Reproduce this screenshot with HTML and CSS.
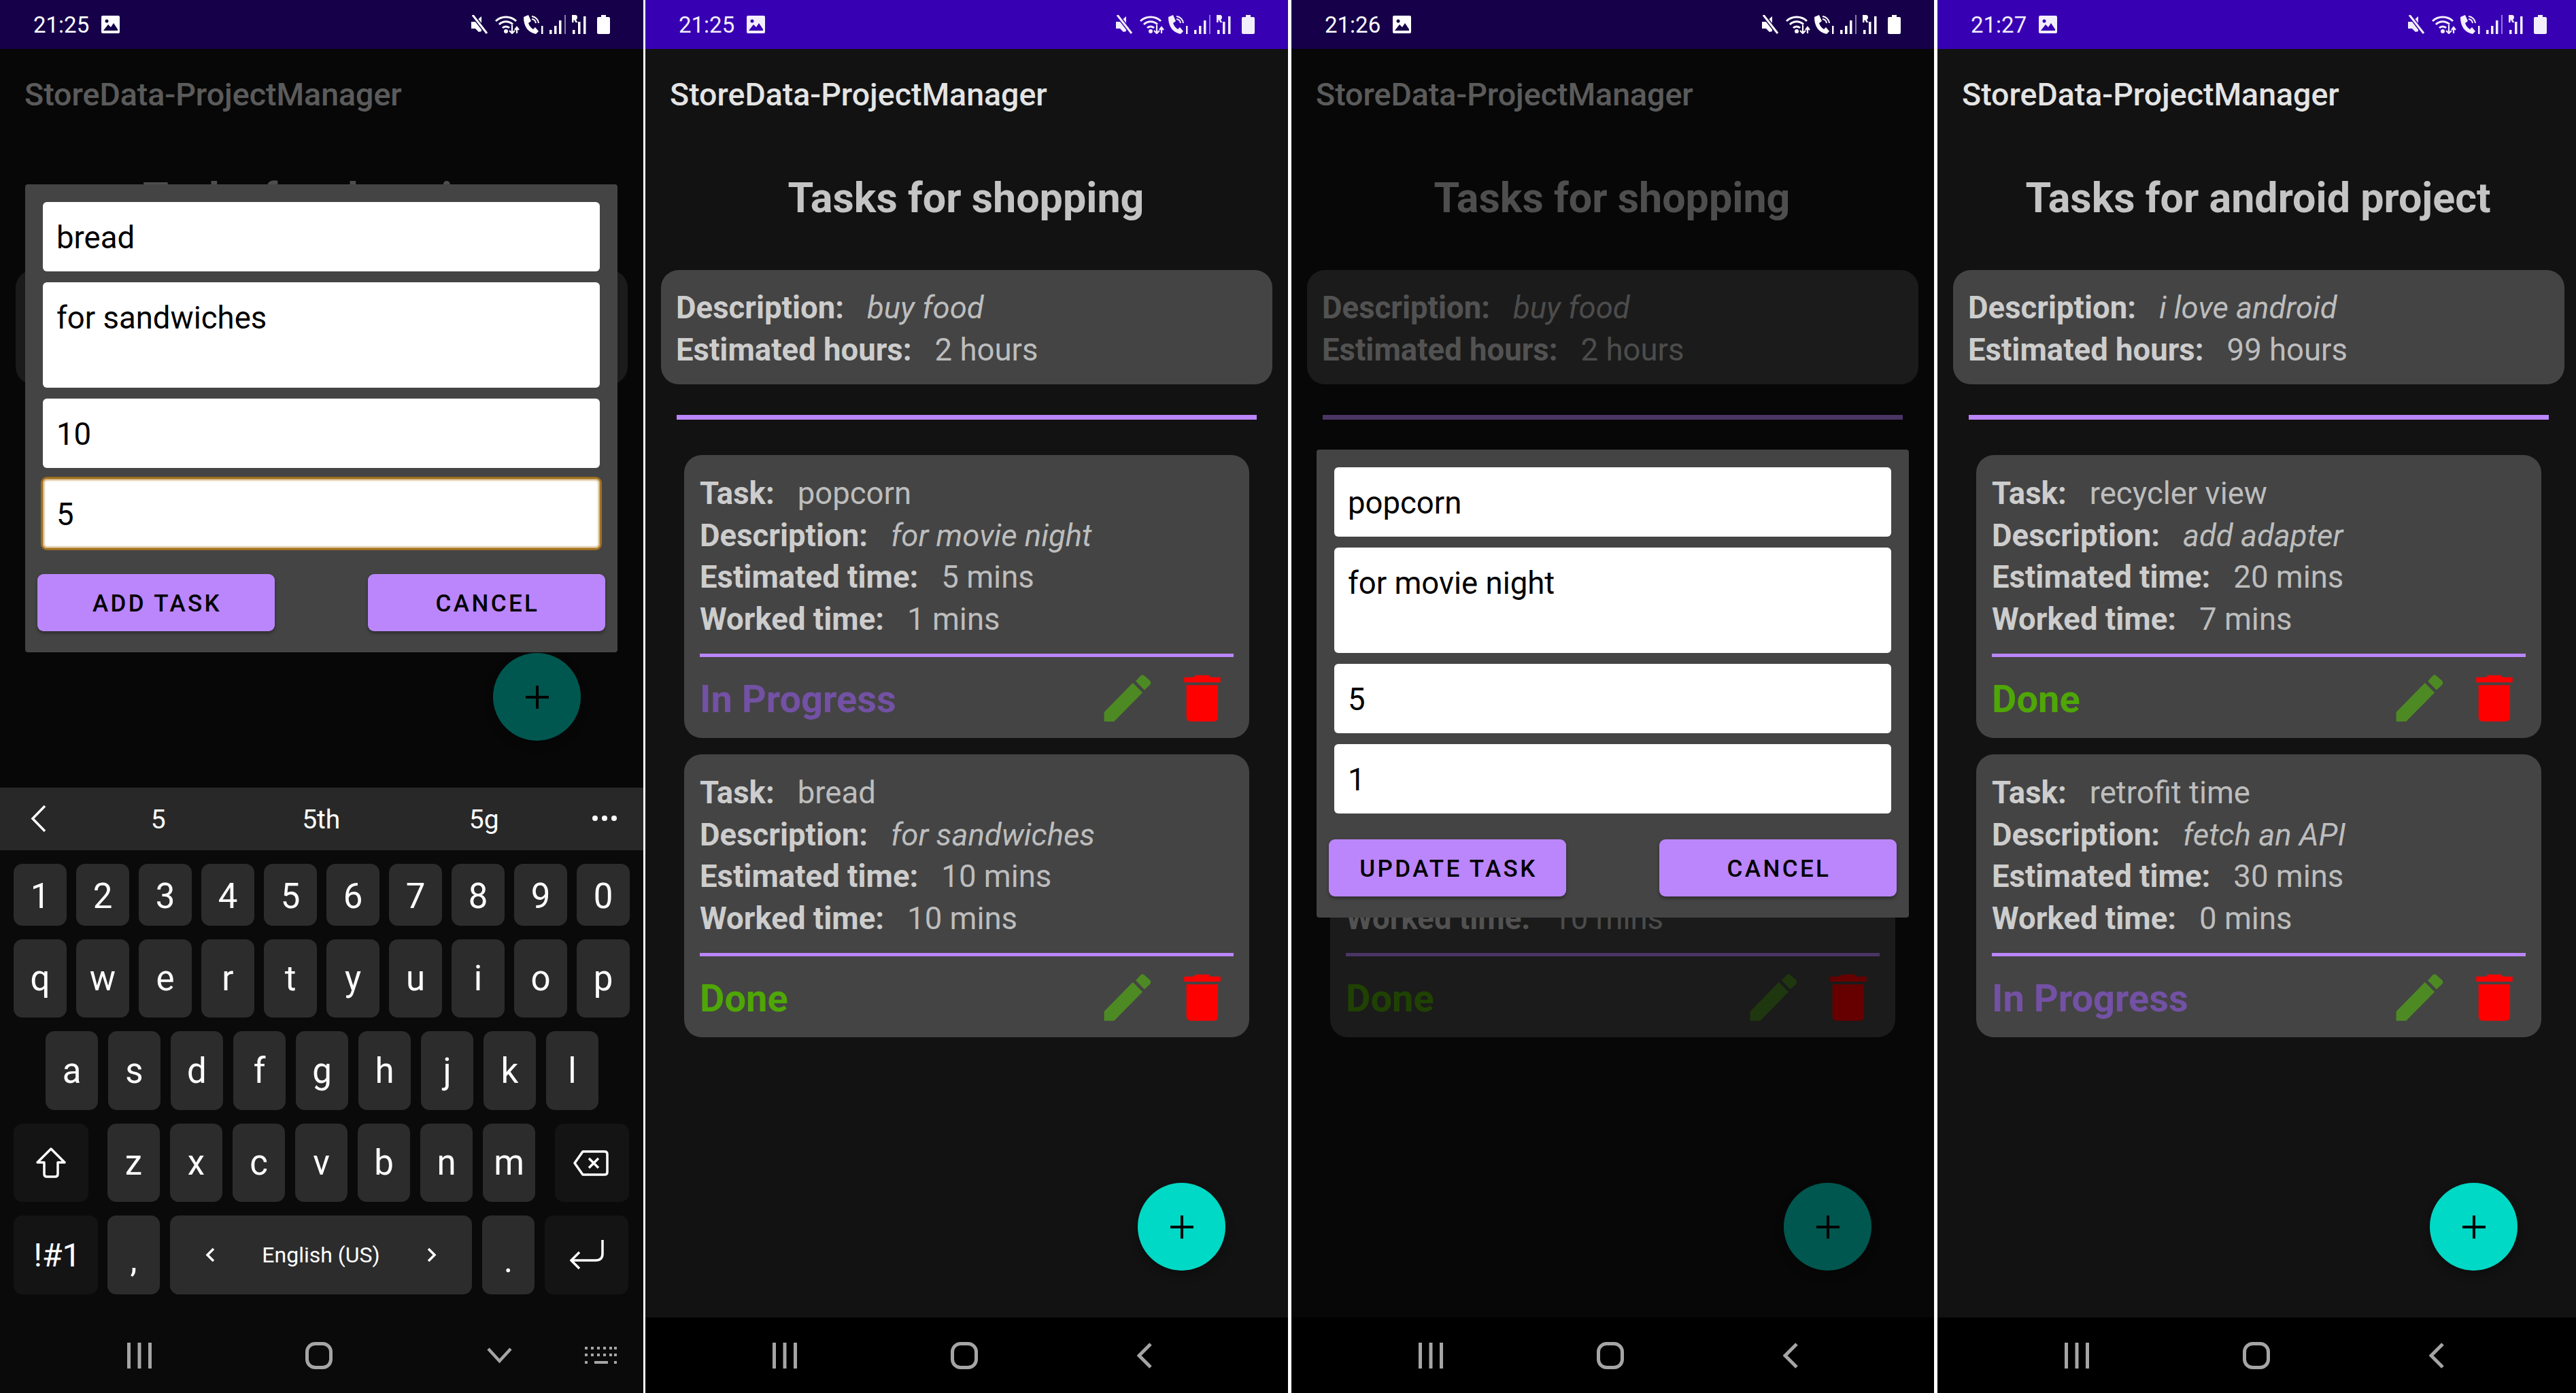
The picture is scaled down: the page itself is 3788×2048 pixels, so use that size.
FILE: index.html
```html
<!DOCTYPE html>
<html lang="en">
<head>
    <meta charset="UTF-8">
    <title>StoreData-ProjectManager</title>
    <link rel="stylesheet" href="styles.css">
</head>
<body>
    <svg class="sprites" width="0" height="0">
        <symbol id="i-image" viewBox="0 0 27 26">
            <rect width="27" height="26" rx="2" fill="currentColor"/>
            <path d="M3 22 L10 13 L14 17 L18 11 L24 20 V22 Z" fill="var(--bar)"/>
            <circle cx="8" cy="8" r="2.5" fill="var(--bar)"/>
        </symbol>
        <symbol id="i-mute" viewBox="0 0 26 28">
            <path d="M1 10 H7 L16 2 V24 L12 25 L7 20 H1 Z" fill="currentColor"/>
            <path d="M3 0 L24 27" stroke="var(--bar)" stroke-width="6"/>
            <path d="M3 0 L24 27" stroke="currentColor" stroke-width="3"/>
        </symbol>
        <symbol id="i-wifi" viewBox="0 0 36 28" fill="none" stroke="currentColor" stroke-width="3">
            <path d="M1 9 A22 22 0 0 1 31 9"/>
            <path d="M6 14 A14 14 0 0 1 26 14"/>
            <path d="M11 19 A7 7 0 0 1 21 19"/>
            <circle cx="16" cy="24" r="1.5"/>
            <path d="M25 15 V27 M21 23 L25 27 L29 23 M32 27 V19" stroke-width="2.2"/>
            <path d="M29 22 L32 18 L35 22" stroke-width="2.2"/>
        </symbol>
        <symbol id="i-call" viewBox="0 0 32 28">
            <path d="M2 3 L9 0 L13 9 L9 12 Q11 18 16 21 L19 18 L24 24 L20 28 Q2 24 2 3 Z" fill="currentColor"/>
            <path d="M14 2 A11 11 0 0 1 24 12 M14 6 A7 7 0 0 1 20 12" fill="none" stroke="currentColor" stroke-width="2"/>
            <rect x="28" y="16" width="2.5" height="12" fill="currentColor"/>
        </symbol>
        <symbol id="i-signal" viewBox="0 0 26 28" fill="currentColor">
            <rect x="0" y="22" width="3.5" height="6"/>
            <rect x="7" y="16" width="3.5" height="12"/>
            <rect x="14" y="8" width="3.5" height="20"/>
            <rect x="22" y="0" width="2" height="28" opacity=".5"/>
        </symbol>
        <symbol id="i-rsignal" viewBox="0 0 25 28" fill="currentColor">
            <path d="M1 0 H6 Q9 0 9 3.5 Q9 6 7 7 L9.5 11 H6.5 L4.5 7.5 H3.5 V11 H1 Z"/>
            <rect x="2" y="22" width="3.5" height="6"/>
            <rect x="10" y="10" width="3.5" height="18"/>
            <rect x="18" y="2" width="3.5" height="26"/>
        </symbol>
        <symbol id="i-battery" viewBox="0 0 19 28">
            <path d="M6 0 H13 V3 H17 Q19 3 19 5 V26 Q19 28 17 28 H2 Q0 28 0 26 V5 Q0 3 2 3 H6 Z" fill="currentColor"/>
        </symbol>
        <symbol id="i-pencil" viewBox="120 90 220 220" fill="currentColor">
            <path d="M128 303 V262 L255 132 L298 175 L172 303 Z"/>
            <path d="M268 125 L288 102 Q298 92 308 102 L330 122 Q340 132 330 142 L306 164 Z"/>
        </symbol>
        <symbol id="i-trash" viewBox="475 90 175 220" fill="currentColor">
            <path d="M482 107 H525 L532 98 H590 L600 107 H643 V130 H482 Z"/>
            <path d="M492 142 H632 V282 Q632 303 612 303 H512 Q492 303 492 282 Z"/>
        </symbol>
        <symbol id="i-plus" viewBox="0 0 34 34">
            <path d="M17 0 V34 M0 17 H34" stroke="currentColor" stroke-width="4"/>
        </symbol>
        <symbol id="i-recents" viewBox="0 0 36 38" fill="currentColor">
            <rect x="0" y="0" width="5" height="38"/>
            <rect x="15.5" y="0" width="5" height="38"/>
            <rect x="31" y="0" width="5" height="38"/>
        </symbol>
        <symbol id="i-home" viewBox="0 0 40 40">
            <rect x="2.5" y="2.5" width="35" height="35" rx="12" fill="none" stroke="currentColor" stroke-width="5"/>
        </symbol>
        <symbol id="i-back" viewBox="0 0 22 38">
            <path d="M20 2 L3 19 L20 36" fill="none" stroke="currentColor" stroke-width="5"/>
        </symbol>
        <symbol id="i-down" viewBox="0 0 37 23">
            <path d="M2 2 L18.500 20 L35 2" fill="none" stroke="currentColor" stroke-width="4.500"/>
        </symbol>
        <symbol id="i-kbd" viewBox="0 0 47 26" fill="currentColor">
            <path d="M0 0 H4 V4 H0 Z M9 0 H13 V4 H9 Z M18 0 H22 V4 H18 Z M27 0 H31 V4 H27 Z M36 0 H40 V4 H36 Z M43 0 H47 V4 H43 Z"/>
            <path d="M0 10 H4 V14 H0 Z M9 10 H13 V14 H9 Z M18 10 H22 V14 H18 Z M27 10 H31 V14 H27 Z M36 10 H40 V14 H36 Z M43 10 H47 V14 H43 Z"/>
            <path d="M0 21 H4 V25 H0 Z M14 21 H34 V25 H14 Z M43 21 H47 V25 H43 Z"/>
        </symbol>
        <symbol id="i-chev-left" viewBox="0 0 23 41">
            <path d="M21 2 L3 20.500 L21 39" fill="none" stroke="currentColor" stroke-width="3.500"/>
        </symbol>
        <symbol id="i-dots" viewBox="0 0 36 8" fill="currentColor">
            <circle cx="4" cy="4" r="4"/><circle cx="18" cy="4" r="4"/><circle cx="32" cy="4" r="4"/>
        </symbol>
        <symbol id="i-shift" viewBox="0 0 44 45">
            <path d="M22 2 L42 22 H32 V39 Q32 43 28 43 H16 Q12 43 12 39 V22 H2 Z" fill="none" stroke="currentColor" stroke-width="3.500" stroke-linejoin="round"/>
        </symbol>
        <symbol id="i-bksp" viewBox="0 0 52 38">
            <path d="M14 2 H46 Q50 2 50 6 V32 Q50 36 46 36 H14 L2 19 Z" fill="none" stroke="currentColor" stroke-width="3.500" stroke-linejoin="round"/>
            <path d="M23 12 L37 26 M37 12 L23 26" stroke="currentColor" stroke-width="3.500"/>
        </symbol>
        <symbol id="i-enter" viewBox="0 0 50 44">
            <path d="M48 0 V20 Q48 30 38 30 H3 M14 18 L2 30 L14 42" fill="none" stroke="currentColor" stroke-width="3.500"/>
        </symbol>
        <symbol id="i-small-left" viewBox="0 0 14 22">
            <path d="M12 2 L3 11 L12 20" fill="none" stroke="currentColor" stroke-width="3.500"/>
        </symbol>
        <symbol id="i-small-right" viewBox="0 0 14 22">
            <path d="M2 2 L11 11 L2 20" fill="none" stroke="currentColor" stroke-width="3.500"/>
        </symbol>
    </svg>

    <div class="phones">

        <!-- add task dialog, keyboard open -->
        <div class="phone">
            <div class="statusbar statusbar-dim">
                <span class="clock">21:25</span>
                <svg class="ic-image"><use href="#i-image"/></svg>
                <div class="status-icons">
                    <svg class="ic-mute"><use href="#i-mute"/></svg>
                    <svg class="ic-wifi"><use href="#i-wifi"/></svg>
                    <svg class="ic-call"><use href="#i-call"/></svg>
                    <svg class="ic-signal"><use href="#i-signal"/></svg>
                    <svg class="ic-rsignal"><use href="#i-rsignal"/></svg>
                    <svg class="ic-battery"><use href="#i-battery"/></svg>
                </div>
            </div>
            <div class="screen">
                <div class="appbar">StoreData-ProjectManager</div>
                <h1 class="heading">Tasks for shopping</h1>
                <div class="project-card">
                    <div class="line"><b>Description:</b><i class="val">buy food</i></div>
                    <div class="line"><b>Estimated hours:</b><span class="val">2 hours</span></div>
                </div>
                <div class="project-rule"></div>
                <div class="fab"><svg class="ic-plus"><use href="#i-plus"/></svg></div>
                <div class="overlay"></div>
                <div class="dialog dialog-add">
                    <div class="field">bread</div>
                    <div class="field field-multi">for sandwiches</div>
                    <div class="field">10</div>
                    <div class="field field-focus">5</div>
                    <div class="dialog-buttons">
                        <div class="btn">ADD TASK</div>
                        <div class="btn">CANCEL</div>
                    </div>
                </div>
            </div>
            <div class="keyboard">
                <div class="suggestions">
                    <svg class="ic-chev-left"><use href="#i-chev-left"/></svg>
                    <span>5</span>
                    <span>5th</span>
                    <span>5g</span>
                    <svg class="ic-dots"><use href="#i-dots"/></svg>
                </div>
                <div class="keys">
                    <div class="key-row row-digits">
                        <div class="key">1</div><div class="key">2</div><div class="key">3</div><div class="key">4</div><div class="key">5</div>
                        <div class="key">6</div><div class="key">7</div><div class="key">8</div><div class="key">9</div><div class="key">0</div>
                    </div>
                    <div class="key-row row-top">
                        <div class="key">q</div><div class="key">w</div><div class="key">e</div><div class="key">r</div><div class="key">t</div>
                        <div class="key">y</div><div class="key">u</div><div class="key">i</div><div class="key">o</div><div class="key">p</div>
                    </div>
                    <div class="key-row row-home">
                        <div class="key">a</div><div class="key">s</div><div class="key">d</div><div class="key">f</div><div class="key">g</div>
                        <div class="key">h</div><div class="key">j</div><div class="key">k</div><div class="key">l</div>
                    </div>
                    <div class="key-row row-bottom">
                        <div class="key key-fn key-shift"><svg class="ic-shift"><use href="#i-shift"/></svg></div>
                        <div class="key">z</div><div class="key">x</div><div class="key">c</div><div class="key">v</div>
                        <div class="key">b</div><div class="key">n</div><div class="key">m</div>
                        <div class="key key-fn key-bksp"><svg class="ic-bksp"><use href="#i-bksp"/></svg></div>
                    </div>
                    <div class="key-row row-space">
                        <div class="key key-fn key-sym">!#1</div>
                        <div class="key key-punct">,</div>
                        <div class="key key-space">
                            <svg class="ic-small"><use href="#i-small-left"/></svg>
                            <span>English (US)</span>
                            <svg class="ic-small"><use href="#i-small-right"/></svg>
                        </div>
                        <div class="key key-punct">.</div>
                        <div class="key key-fn key-enter"><svg class="ic-enter"><use href="#i-enter"/></svg></div>
                    </div>
                </div>
            </div>
            <div class="navbar navbar-keyboard">
                <svg class="ic-recents"><use href="#i-recents"/></svg>
                <svg class="ic-home"><use href="#i-home"/></svg>
                <svg class="ic-down"><use href="#i-down"/></svg>
                <svg class="ic-kbd"><use href="#i-kbd"/></svg>
            </div>
        </div>

        <!-- task list -->
        <div class="phone phone-second">
            <div class="statusbar">
                <span class="clock">21:25</span>
                <svg class="ic-image"><use href="#i-image"/></svg>
                <div class="status-icons">
                    <svg class="ic-mute"><use href="#i-mute"/></svg>
                    <svg class="ic-wifi"><use href="#i-wifi"/></svg>
                    <svg class="ic-call"><use href="#i-call"/></svg>
                    <svg class="ic-signal"><use href="#i-signal"/></svg>
                    <svg class="ic-rsignal"><use href="#i-rsignal"/></svg>
                    <svg class="ic-battery"><use href="#i-battery"/></svg>
                </div>
            </div>
            <div class="screen">
                <div class="appbar">StoreData-ProjectManager</div>
                <h1 class="heading">Tasks for shopping</h1>
                <div class="project-card">
                    <div class="line"><b>Description:</b><i class="val">buy food</i></div>
                    <div class="line"><b>Estimated hours:</b><span class="val">2 hours</span></div>
                </div>
                <div class="project-rule"></div>
                <div class="task-card">
                    <div class="line"><b>Task:</b><span class="val">popcorn</span></div>
                    <div class="line"><b>Description:</b><i class="val">for movie night</i></div>
                    <div class="line"><b>Estimated time:</b><span class="val">5 mins</span></div>
                    <div class="line"><b>Worked time:</b><span class="val">1 mins</span></div>
                    <div class="task-rule"></div>
                    <div class="task-footer">
                        <span class="state state-progress">In Progress</span>
                        <div class="task-actions">
                            <svg class="ic-pencil"><use href="#i-pencil"/></svg>
                            <svg class="ic-trash"><use href="#i-trash"/></svg>
                        </div>
                    </div>
                </div>
                <div class="task-card">
                    <div class="line"><b>Task:</b><span class="val">bread</span></div>
                    <div class="line"><b>Description:</b><i class="val">for sandwiches</i></div>
                    <div class="line"><b>Estimated time:</b><span class="val">10 mins</span></div>
                    <div class="line"><b>Worked time:</b><span class="val">10 mins</span></div>
                    <div class="task-rule"></div>
                    <div class="task-footer">
                        <span class="state state-done">Done</span>
                        <div class="task-actions">
                            <svg class="ic-pencil"><use href="#i-pencil"/></svg>
                            <svg class="ic-trash"><use href="#i-trash"/></svg>
                        </div>
                    </div>
                </div>
                <div class="fab"><svg class="ic-plus"><use href="#i-plus"/></svg></div>
            </div>
            <div class="navbar">
                <svg class="ic-recents"><use href="#i-recents"/></svg>
                <svg class="ic-home"><use href="#i-home"/></svg>
                <svg class="ic-back"><use href="#i-back"/></svg>
            </div>
        </div>

        <!-- update task dialog -->
        <div class="phone">
            <div class="statusbar statusbar-dim">
                <span class="clock">21:26</span>
                <svg class="ic-image"><use href="#i-image"/></svg>
                <div class="status-icons">
                    <svg class="ic-mute"><use href="#i-mute"/></svg>
                    <svg class="ic-wifi"><use href="#i-wifi"/></svg>
                    <svg class="ic-call"><use href="#i-call"/></svg>
                    <svg class="ic-signal"><use href="#i-signal"/></svg>
                    <svg class="ic-rsignal"><use href="#i-rsignal"/></svg>
                    <svg class="ic-battery"><use href="#i-battery"/></svg>
                </div>
            </div>
            <div class="screen">
                <div class="appbar">StoreData-ProjectManager</div>
                <h1 class="heading">Tasks for shopping</h1>
                <div class="project-card">
                    <div class="line"><b>Description:</b><i class="val">buy food</i></div>
                    <div class="line"><b>Estimated hours:</b><span class="val">2 hours</span></div>
                </div>
                <div class="project-rule"></div>
                <div class="task-card">
                    <div class="line"><b>Task:</b><span class="val">popcorn</span></div>
                    <div class="line"><b>Description:</b><i class="val">for movie night</i></div>
                    <div class="line"><b>Estimated time:</b><span class="val">5 mins</span></div>
                    <div class="line"><b>Worked time:</b><span class="val">1 mins</span></div>
                    <div class="task-rule"></div>
                    <div class="task-footer">
                        <span class="state state-progress">In Progress</span>
                        <div class="task-actions">
                            <svg class="ic-pencil"><use href="#i-pencil"/></svg>
                            <svg class="ic-trash"><use href="#i-trash"/></svg>
                        </div>
                    </div>
                </div>
                <div class="task-card">
                    <div class="line"><b>Task:</b><span class="val">bread</span></div>
                    <div class="line"><b>Description:</b><i class="val">for sandwiches</i></div>
                    <div class="line"><b>Estimated time:</b><span class="val">10 mins</span></div>
                    <div class="line"><b>Worked time:</b><span class="val">10 mins</span></div>
                    <div class="task-rule"></div>
                    <div class="task-footer">
                        <span class="state state-done">Done</span>
                        <div class="task-actions">
                            <svg class="ic-pencil"><use href="#i-pencil"/></svg>
                            <svg class="ic-trash"><use href="#i-trash"/></svg>
                        </div>
                    </div>
                </div>
                <div class="fab"><svg class="ic-plus"><use href="#i-plus"/></svg></div>
                <div class="overlay"></div>
                <div class="dialog dialog-update">
                    <div class="field">popcorn</div>
                    <div class="field field-multi">for movie night</div>
                    <div class="field">5</div>
                    <div class="field">1</div>
                    <div class="dialog-buttons">
                        <div class="btn">UPDATE TASK</div>
                        <div class="btn">CANCEL</div>
                    </div>
                </div>
            </div>
            <div class="navbar">
                <svg class="ic-recents"><use href="#i-recents"/></svg>
                <svg class="ic-home"><use href="#i-home"/></svg>
                <svg class="ic-back"><use href="#i-back"/></svg>
            </div>
        </div>

        <!-- other project -->
        <div class="phone">
            <div class="statusbar">
                <span class="clock">21:27</span>
                <svg class="ic-image"><use href="#i-image"/></svg>
                <div class="status-icons">
                    <svg class="ic-mute"><use href="#i-mute"/></svg>
                    <svg class="ic-wifi"><use href="#i-wifi"/></svg>
                    <svg class="ic-call"><use href="#i-call"/></svg>
                    <svg class="ic-signal"><use href="#i-signal"/></svg>
                    <svg class="ic-rsignal"><use href="#i-rsignal"/></svg>
                    <svg class="ic-battery"><use href="#i-battery"/></svg>
                </div>
            </div>
            <div class="screen">
                <div class="appbar">StoreData-ProjectManager</div>
                <h1 class="heading">Tasks for android project</h1>
                <div class="project-card">
                    <div class="line"><b>Description:</b><i class="val">i love android</i></div>
                    <div class="line"><b>Estimated hours:</b><span class="val">99 hours</span></div>
                </div>
                <div class="project-rule"></div>
                <div class="task-card">
                    <div class="line"><b>Task:</b><span class="val">recycler view</span></div>
                    <div class="line"><b>Description:</b><i class="val">add adapter</i></div>
                    <div class="line"><b>Estimated time:</b><span class="val">20 mins</span></div>
                    <div class="line"><b>Worked time:</b><span class="val">7 mins</span></div>
                    <div class="task-rule"></div>
                    <div class="task-footer">
                        <span class="state state-done">Done</span>
                        <div class="task-actions">
                            <svg class="ic-pencil"><use href="#i-pencil"/></svg>
                            <svg class="ic-trash"><use href="#i-trash"/></svg>
                        </div>
                    </div>
                </div>
                <div class="task-card">
                    <div class="line"><b>Task:</b><span class="val">retrofit time</span></div>
                    <div class="line"><b>Description:</b><i class="val">fetch an API</i></div>
                    <div class="line"><b>Estimated time:</b><span class="val">30 mins</span></div>
                    <div class="line"><b>Worked time:</b><span class="val">0 mins</span></div>
                    <div class="task-rule"></div>
                    <div class="task-footer">
                        <span class="state state-progress">In Progress</span>
                        <div class="task-actions">
                            <svg class="ic-pencil"><use href="#i-pencil"/></svg>
                            <svg class="ic-trash"><use href="#i-trash"/></svg>
                        </div>
                    </div>
                </div>
                <div class="fab"><svg class="ic-plus"><use href="#i-plus"/></svg></div>
            </div>
            <div class="navbar">
                <svg class="ic-recents"><use href="#i-recents"/></svg>
                <svg class="ic-home"><use href="#i-home"/></svg>
                <svg class="ic-back"><use href="#i-back"/></svg>
            </div>
        </div>

    </div>
</body>
</html>
```

FILE: styles.css
```css
* {
    box-sizing: border-box;
}
html, body {
    margin: 0;
    height: 100%;
    overflow: hidden;
}
body {
    background: #fff;
    font-family: Roboto, "Liberation Sans", sans-serif;
}
.sprites {
    position: absolute;
}
.phones {
    display: flex;
    width: 3788px;
    height: 2048px;
    gap: 5px;
    overflow: hidden;
}
.phone {
    flex: 0 0 945px;
    height: 2048px;
    display: flex;
    flex-direction: column;
    background: #121212;
}
.phone-second {
    margin-left: -2px;
}

/* status bar */
.statusbar {
    --bar: #3700b3;
    height: 72px;
    flex: none;
    display: flex;
    align-items: center;
    padding: 0 49px 0 49px;
    background: #3700b3;
    color: #f3eefc;
}
.statusbar-dim {
    --bar: #16004a;
    background: #16004a;
    color: #fff;
}
.clock {
    font-size: 33px;
    width: 100px;
}
.status-icons {
    margin-left: auto;
    display: flex;
    align-items: center;
}
.statusbar svg {
    display: block;
}
.ic-image { width: 27px; height: 26px; }
.ic-mute { width: 26px; height: 28px; }
.ic-wifi { width: 36px; height: 28px; margin-left: 10px; }
.ic-call { width: 32px; height: 28px; margin-left: 4px; }
.ic-signal { width: 26px; height: 28px; margin-left: 8px; }
.ic-rsignal { width: 25px; height: 28px; margin-left: 6px; }
.ic-battery { width: 19px; height: 28px; margin-left: 13px; }

/* screen */
.screen {
    flex: 1;
    position: relative;
    overflow: hidden;
    color: #c8c8c8;
}
.appbar {
    height: 134px;
    padding-left: 36px;
    display: flex;
    align-items: center;
    font-size: 46.500px;
    font-weight: 500;
    color: #e4e4e4;
}
.heading {
    margin: 45px 0 66px;
    line-height: 80px;
    font-size: 61px;
    font-weight: 700;
    text-align: center;
    color: #c4c4c4;
    transform: translateX(-1px);
}
.line {
    height: 61.5px;
    line-height: 61.5px;
    font-size: 45.500px;
    white-space: nowrap;
}
.line b {
    color: #cdcdcd;
}
.val {
    margin-left: 34px;
    color: #bdbdbd;
}
.project-card {
    margin: 0 23px;
    height: 168px;
    padding: 25px 22px;
    border-radius: 26px;
    background: #444;
}
.project-rule {
    height: 7px;
    margin: 45px 46px 52px;
    background: #bb86fc;
}
.task-card {
    margin: 0 57px 24px;
    height: 416px;
    padding: 26px 23px 0;
    border-radius: 26px;
    background: #444;
}
.task-rule {
    height: 5px;
    margin: 20px 0 0;
    background: #bb86fc;
}
.task-footer {
    height: 119px;
    padding-top: 4px;
    display: flex;
    align-items: center;
    justify-content: space-between;
}
.state {
    font-size: 56px;
    font-weight: 700;
}
.state-progress { color: #7351a4; }
.state-done { color: #4fa607; }
.task-actions {
    display: flex;
    gap: 45px;
    margin: 0 17px 2px 0;
}
.ic-pencil { width: 73px; height: 73px; color: #4e8a24; }
.ic-trash { width: 58px; height: 73px; color: #f00; }

.fab {
    position: absolute;
    right: 92px;
    bottom: 69px;
    width: 129px;
    height: 129px;
    border-radius: 50%;
    background: #00d9c5;
    display: flex;
    align-items: center;
    justify-content: center;
    color: #000;
    box-shadow: 0 6px 14px rgba(0, 0, 0, 0.3);
}
.ic-plus { width: 34px; height: 34px; }

/* dialog */
.overlay {
    position: absolute;
    inset: 0;
    background: rgba(0, 0, 0, 0.6);
}
.dialog {
    position: absolute;
    left: 37px;
    width: 871px;
    padding: 26px 26px 31px;
    border-radius: 4px;
    background: #444;
    display: flex;
    flex-direction: column;
    gap: 16px;
}
.dialog-add { top: 199px; }
.dialog-update { top: 589px; }
.field {
    height: 102px;
    padding: 2px 0 0 20px;
    line-height: 102px;
    font-size: 45.500px;
    color: #000;
    background: #fff;
    border-radius: 6px;
}
.field-multi {
    height: 155px;
}
.field-focus {
    box-shadow: 0 0 0 3px #a0701e, inset 0 0 3px 2px #c9a468;
}
.dialog-buttons {
    display: flex;
    justify-content: space-between;
    margin: 22px -8px 0;
}
.btn {
    width: 349px;
    height: 84px;
    padding: 2px 0 0 3px;
    line-height: 84px;
    border-radius: 9px;
    text-align: center;
    font-size: 35px;
    font-weight: 500;
    letter-spacing: 3.400px;
    color: #000;
    background: #bb86fc;
    box-shadow: 0 3px 5px rgba(0, 0, 0, 0.35);
}

/* keyboard */
.keyboard {
    flex: none;
    height: 779px;
    background: #0a0a0a;
    color: #fff;
}
.suggestions {
    height: 92px;
    padding-top: 2px;
    display: grid;
    grid-template-columns: 113px repeat(3, 239.500px) 1fr;
    align-items: center;
    justify-items: center;
    font-size: 39px;
    background: #282828;
}
.ic-chev-left { width: 23px; height: 41px; margin-top: -4px; }
.ic-dots { width: 36px; height: 8px; margin-top: -4px; }
.keys {
    display: flex;
    flex-direction: column;
    gap: 20px;
    padding: 20px 20px 0;
}
.key-row {
    display: flex;
    align-items: stretch;
}
.key {
    flex: none;
    width: 77px;
    display: flex;
    align-items: center;
    justify-content: center;
    font-size: 51px;
    border-radius: 13px;
    background: #2c2c2c;
}
.row-digits { height: 91px; gap: 14px; }
.row-digits .key { padding-top: 3px; }
.row-top { height: 115px; gap: 14px; }
.row-digits .key, .row-top .key { width: 78px; }
.row-home { height: 116px; gap: 15px; padding-left: 47px; }
.row-bottom { height: 115px; gap: 15px; }
.row-space { height: 116px; gap: 15px; }
.key-fn {
    background: #141414;
}
.key-shift { width: 110px; margin-right: 13px; }
.key-bksp { width: 109px; margin-left: 14px; }
.key-sym { width: 124px; margin-right: -1px; padding-left: 4px; font-size: 48px; }
.key-punct { padding-top: 14px; }
.key-space {
    width: 444px;
    gap: 0;
    justify-content: space-between;
    padding: 0 52px;
    font-size: 32px;
}
.key-enter { width: 123px; }
.ic-small { width: 14px; height: 22px; }
.ic-shift { width: 44px; height: 45px; }
.ic-bksp { width: 52px; height: 38px; margin-right: 4px; }
.ic-enter { width: 50px; height: 44px; }

/* nav */
.navbar {
    flex: none;
    height: 111px;
    padding-left: 187px;
    display: flex;
    align-items: center;
    color: #a5a5a5;
    background: #000;
}
.navbar-keyboard {
    background: #0a0a0a;
}
.ic-recents { width: 36px; height: 38px; }
.ic-home { width: 40px; height: 40px; margin-left: 226px; }
.ic-back { width: 22px; height: 38px; margin-left: 234px; }
.ic-down { width: 37px; height: 23px; margin-left: 227px; }
.ic-kbd { width: 47px; height: 26px; margin-left: 107px; }
```
